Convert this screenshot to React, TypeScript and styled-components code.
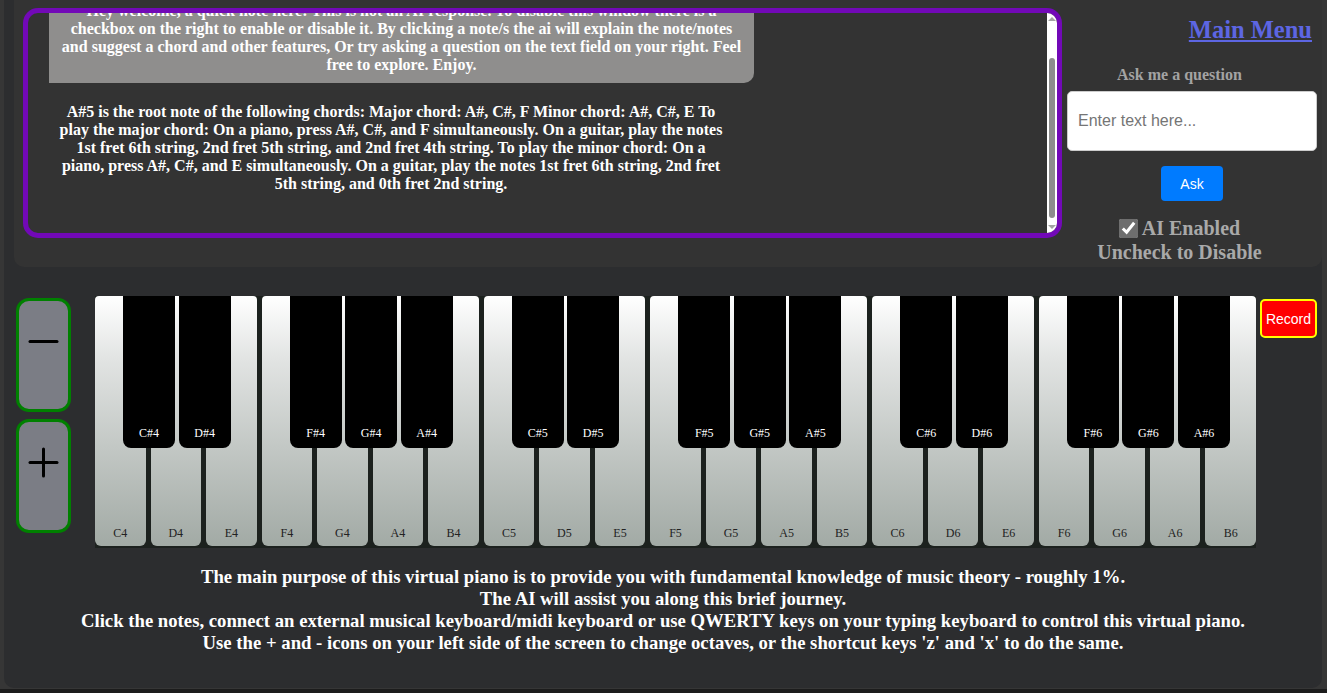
import React, { useEffect, useRef } from 'react';
import styled, { createGlobalStyle } from 'styled-components';

const GlobalStyle = createGlobalStyle`
  html {
    background: #1c1c1c;
  }
  body {
    margin: 0;
    height: 689px;
    background: #363636;
    font-family: "Liberation Serif", "Times New Roman", serif;
    overflow: hidden;
  }
  * {
    box-sizing: border-box;
  }
`;

const Page = styled.div`
  margin-left: 4px;
  width: 1318px;
  height: 688px;
  background: #2c2d2f;
  border-radius: 0 0 10px 10px;
`;

const TopPanel = styled.div`
  display: flex;
  margin-left: 10px;
  height: 267px;
  padding: 8px 5px 0 9px;
  background: #333333;
  border-radius: 0 0 10px 10px;
`;

const ChatBox = styled.div`
  display: flex;
  width: 1039px;
  height: 230px;
  border: 5px solid #7209b7;
  border-radius: 15px;
  background: #333333;
  overflow: hidden;
`;

const ChatScroll = styled.div`
  flex: 1;
  overflow-y: scroll;
  padding: 26px 0 0 21px;
  scrollbar-width: none;
`;

const ScrollTrack = styled.div`
  display: flex;
  flex-direction: column;
  align-items: center;
  width: 10px;
  background: #ffffff;
`;

const ScrollArrow = styled.div<{ $down?: boolean }>`
  display: flex;
  align-items: center;
  justify-content: center;
  height: 12px;

  &::after {
    content: '';
    border-left: 4px solid transparent;
    border-right: 4px solid transparent;
    ${(p) => (p.$down ? 'border-top: 4px solid #a3a3a3;' : 'border-bottom: 4px solid #a3a3a3;')}
  }
`;

const ScrollThumb = styled.div`
  width: 6px;
  height: 160px;
  margin: auto 0 3px;
  border-radius: 3px;
  background: #8d8d8d;
`;

const Bubble = styled.div`
  width: 705px;
  padding: 10px 10px 9px;
  background: #8f8e8d;
  border-radius: 10px 10px 10px 0;
  color: #ffffff;
  font-weight: bold;
  font-size: 16px;
  line-height: 18px;
  text-align: center;
`;

const AiMessage = styled.div`
  width: 672px;
  margin: 20px 0 0 6px;
  padding: 0 0 40px;
  color: #ffffff;
  font-weight: bold;
  font-size: 16px;
  line-height: 18px;
  text-align: center;
`;

const SideColumn = styled.div`
  display: flex;
  flex-direction: column;
  align-items: center;
  width: 250px;
  margin-left: 5px;
`;

const MainMenu = styled.a`
  align-self: flex-end;
  margin: 8px 5px 0 0;
  color: #5d66e3;
  font-size: 24.5px;
  line-height: 28px;
  font-weight: bold;
  text-decoration: underline;
  cursor: pointer;
`;

const AskLabel = styled.div`
  margin: 22px 25px 0 0;
  color: #a3a3a3;
  font-size: 16px;
  line-height: 18px;
  font-weight: bold;
`;

const QuestionInput = styled.input`
  width: 250px;
  height: 60px;
  margin-top: 7px;
  padding: 0 10px;
  border: 1px solid #cccccc;
  border-radius: 5px;
  background: #ffffff;
  font-family: "Liberation Sans", Arial, sans-serif;
  font-size: 16px;
  outline: none;

  &::placeholder {
    color: #757575;
  }
`;

const AskButton = styled.button`
  width: 62px;
  height: 35px;
  margin-top: 15px;
  border: none;
  border-radius: 4px;
  background: #007bff;
  color: #ffffff;
  font-family: "Liberation Sans", Arial, sans-serif;
  font-size: 14px;
`;

const ToggleBlock = styled.label`
  display: flex;
  flex-direction: column;
  align-items: center;
  margin: 15px 25px 0 0;
  color: #a9a9a9;
  font-size: 20px;
  line-height: 24px;
  font-weight: bold;
`;

const ToggleRow = styled.span`
  display: flex;
  align-items: center;
`;

const Check = styled.input`
  width: 19px;
  height: 19px;
  margin: 0 4px 0 0;
  accent-color: #6e6e6e;
`;

const PianoSection = styled.div`
  display: flex;
  align-items: flex-start;
  padding: 29px 0 0 12px;
`;

const OctaveColumn = styled.div`
  display: flex;
  flex-direction: column;
  gap: 7px;
  width: 55px;
  margin-top: 2px;
`;

const OctaveButton = styled.button`
  display: flex;
  align-items: center;
  justify-content: center;
  height: 114px;
  padding: 0 0 28px;
  border: 3px solid #008000;
  border-radius: 13px;
  background: #7b7d85;
`;

const Keyboard = styled.div`
  display: grid;
  grid-template-columns: repeat(21, 1fr);
  gap: 5px;
  width: 1161px;
  height: 252px;
  margin-left: 24px;
  padding-bottom: 2px;
  background: #1c211e;
`;

const WhiteKey = styled.div`
  position: relative;
  display: flex;
  align-items: flex-end;
  justify-content: center;
  padding-bottom: 5px;
  border-radius: 4px 4px 6px 6px;
  background: linear-gradient(to bottom, #ffffff 0%, #e2e4e3 25%, #c3c8c5 60%, #a2aaa5 100%);
  color: #222222;
  font-size: 12px;
`;

const BlackKey = styled.div`
  position: absolute;
  top: 0;
  right: -29.5px;
  z-index: 1;
  display: flex;
  align-items: flex-end;
  justify-content: center;
  width: 52px;
  height: 152px;
  padding-bottom: 7px;
  border-radius: 0 0 8px 8px;
  background: #000000;
  color: #ffffff;
  font-size: 12px;
`;

const RecordButton = styled.button`
  width: 57px;
  height: 39px;
  margin: 3px 0 0 4px;
  padding: 0;
  border: 2px solid #ffff00;
  border-radius: 5px;
  background: #ff0000;
  color: #ffffff;
  font-family: "Liberation Sans", Arial, sans-serif;
  font-size: 14px;
`;

const InfoText = styled.div`
  margin-top: 18px;
  color: #ffffff;
  font-size: 18.72px;
  line-height: 22px;
  font-weight: bold;
  text-align: center;
`;

const letters = ['C', 'D', 'E', 'F', 'G', 'A', 'B'];
const hasSharp = ['C', 'D', 'F', 'G', 'A'];
const keys = [4, 5, 6].flatMap((octave) => letters.map((l) => ({ letter: l, octave })));

const App = () => {
  const chatRef = useRef<HTMLDivElement>(null);

  useEffect(() => {
    if (chatRef.current) {
      chatRef.current.scrollTop = chatRef.current.scrollHeight;
    }
  }, []);

  return (
    <>
      <GlobalStyle />
      <Page>
        <TopPanel>
          <ChatBox>
            <ChatScroll ref={chatRef}>
              <Bubble>
                Hey welcome, a quick note here: This is not an AI response. To disable this window there is a
                checkbox on the right to enable or disable it. By clicking a note/s the ai will explain the note/notes
                and suggest a chord and other features, Or try asking a question on the text field on your right. Feel
                free to explore. Enjoy.
              </Bubble>
              <AiMessage>
                A#5 is the root note of the following chords: Major chord: A#, C#, F Minor chord: A#, C#, E To play
                the major chord: On a piano, press A#, C#, and F simultaneously. On a guitar, play the notes 1st fret
                6th string, 2nd fret 5th string, and 2nd fret 4th string. To play the minor chord: On a piano, press
                A#, C#, and E simultaneously. On a guitar, play the notes 1st fret 6th string, 2nd fret 5th string,
                and 0th fret 2nd string.
              </AiMessage>
            </ChatScroll>
            <ScrollTrack>
              <ScrollArrow />
              <ScrollThumb />
              <ScrollArrow $down />
            </ScrollTrack>
          </ChatBox>
          <SideColumn>
            <MainMenu>Main Menu</MainMenu>
            <AskLabel>Ask me a question</AskLabel>
            <QuestionInput placeholder="Enter text here..." />
            <AskButton>Ask</AskButton>
            <ToggleBlock>
              <ToggleRow>
                <Check type="checkbox" defaultChecked />
                AI Enabled
              </ToggleRow>
              Uncheck to Disable
            </ToggleBlock>
          </SideColumn>
        </TopPanel>

        <PianoSection>
          <OctaveColumn>
            <OctaveButton>
              <svg width="31" height="31" viewBox="0 0 31 31">
                <line x1="2" y1="15.5" x2="29" y2="15.5" stroke="#000" strokeWidth="3" strokeLinecap="round" />
              </svg>
            </OctaveButton>
            <OctaveButton>
              <svg width="31" height="31" viewBox="0 0 31 31">
                <line x1="2" y1="15.5" x2="29" y2="15.5" stroke="#000" strokeWidth="3" strokeLinecap="round" />
                <line x1="15.5" y1="2" x2="15.5" y2="29" stroke="#000" strokeWidth="3" strokeLinecap="round" />
              </svg>
            </OctaveButton>
          </OctaveColumn>
          <Keyboard>
            {keys.map((k) => (
              <WhiteKey key={`${k.letter}${k.octave}`}>
                {k.letter}
                {k.octave}
                {hasSharp.includes(k.letter) && (
                  <BlackKey>
                    {k.letter}#{k.octave}
                  </BlackKey>
                )}
              </WhiteKey>
            ))}
          </Keyboard>
          <RecordButton>Record</RecordButton>
        </PianoSection>

        <InfoText>
          The main purpose of this virtual piano is to provide you with fundamental knowledge of music theory - roughly 1%.
          <br />
          The AI will assist you along this brief journey.
          <br />
          Click the notes, connect an external musical keyboard/midi keyboard or use QWERTY keys on your typing keyboard to control this virtual piano.
          <br />
          Use the + and - icons on your left side of the screen to change octaves, or the shortcut keys 'z' and 'x' to do the same.
        </InfoText>
      </Page>
    </>
  );
};

export default App;
